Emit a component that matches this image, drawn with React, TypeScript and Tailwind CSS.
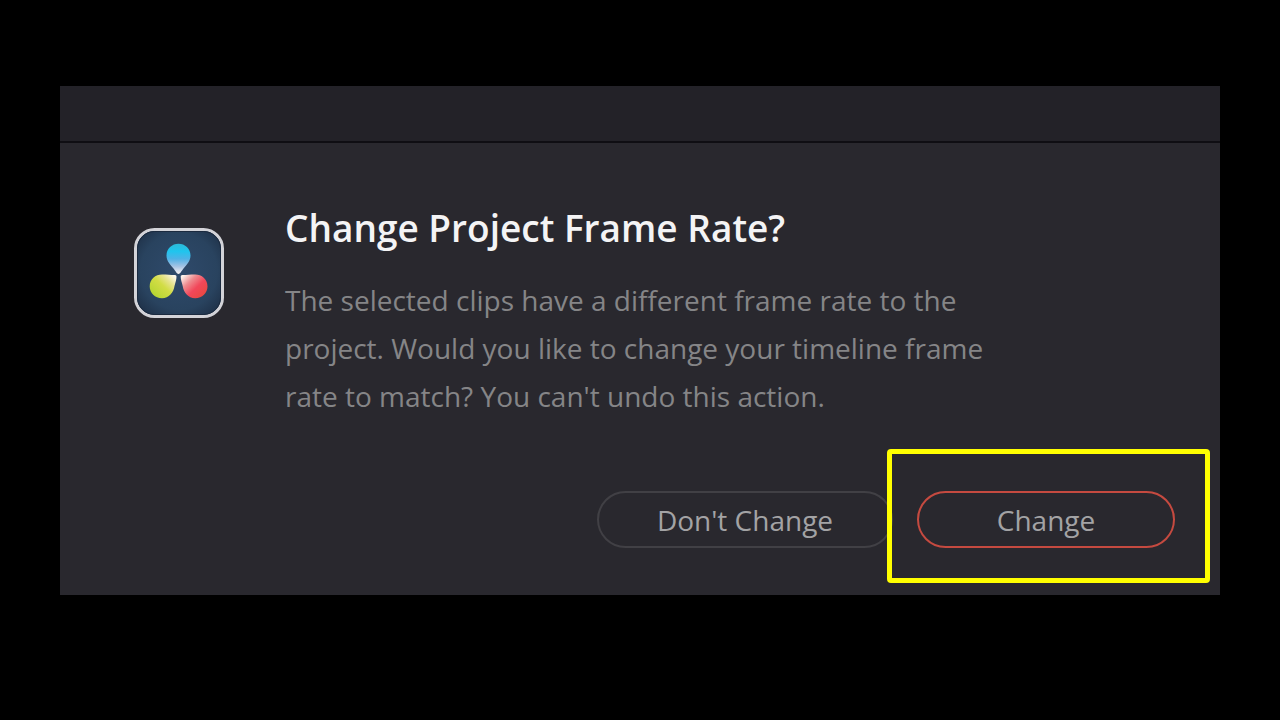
import clsx from "clsx";
import type { ReactNode } from "react";

type DialogButtonProps = {
  children: ReactNode;
  primary?: boolean;
};

function DialogButton({ children, primary }: DialogButtonProps) {
  return (
    <button
      type="button"
      className={clsx(
        "h-[57px] rounded-full border-2 text-[28px] leading-8 text-[#a3a3a5]",
        primary
          ? "w-[258px] border-[#c54a40]"
          : "w-[296px] border-[#414045]"
      )}
    >
      {children}
    </button>
  );
}

function ResolveIcon() {
  return (
    <svg viewBox="0 0 90 90" className="mt-3 h-[90px] w-[90px] shrink-0" aria-hidden="true">
      <defs>
        <radialGradient id="tile" cx="50%" cy="48%" r="68%">
          <stop offset="0" stopColor="#2f4a6b" />
          <stop offset="0.65" stopColor="#29435f" />
          <stop offset="1" stopColor="#1c2c42" />
        </radialGradient>
        <linearGradient id="blue" x1="0" y1="0" x2="0" y2="1">
          <stop offset="0" stopColor="#2cb9d8" />
          <stop offset="0.25" stopColor="#1fc5ee" />
          <stop offset="0.5" stopColor="#4fb2e6" />
          <stop offset="0.75" stopColor="#a5c3e4" />
          <stop offset="1" stopColor="#fbf4f3" />
        </linearGradient>
        <linearGradient id="green" x1="0.1" y1="0.9" x2="0.95" y2="0.1">
          <stop offset="0" stopColor="#b3d430" />
          <stop offset="0.5" stopColor="#d2dd45" />
          <stop offset="0.75" stopColor="#e6e38e" />
          <stop offset="1" stopColor="#fdf7ea" />
        </linearGradient>
        <linearGradient id="red" x1="0.9" y1="0.9" x2="0.05" y2="0.1">
          <stop offset="0" stopColor="#e8483f" />
          <stop offset="0.4" stopColor="#f2475a" />
          <stop offset="0.7" stopColor="#ee8a8e" />
          <stop offset="1" stopColor="#fdf1ea" />
        </linearGradient>
      </defs>
      <rect x="1.5" y="1.5" width="87" height="87" rx="19" fill="url(#tile)" stroke="#d3d3d8" strokeWidth="3" />
      <rect x="3.5" y="3.5" width="83" height="83" rx="17" fill="none" stroke="#1b2a3f" strokeWidth="1" />
      <path
        d="M44.5 46C43 46 41.5 43 39.5 40.500C36 36.500 32.500 33 32.500 27.500C32.500 20.500 38 15.700 44.500 15.700C51 15.700 56.500 20.500 56.500 27.500C56.500 33 53 36.500 49.500 40.500C47.500 43 46 46 44.5 46Z"
        fill="url(#blue)"
      />
      <path
        d="M42.500 48.500C42.500 51.500 41.500 54 40.500 58C39.500 64.500 35 70.300 28 70.300C21 70.300 15.700 65 15.700 58.500C15.700 51 21.500 46.500 28 46.500C33 46.500 36.500 47 40.500 47C41.700 47 42.500 47.500 42.500 48.500Z"
        fill="url(#green)"
      />
      <path
        d="M46.700 48.500C46.700 51.500 47.700 54 48.700 58C49.700 64.500 54.200 70.300 61.200 70.300C68.200 70.300 73.500 65 73.500 58.500C73.500 51 67.700 46.500 61.200 46.500C56.200 46.500 52.700 47 48.700 47C47.500 47 46.700 47.500 46.700 48.500Z"
        fill="url(#red)"
      />
    </svg>
  );
}

export default function App() {
  return (
    <main className="min-h-screen bg-black px-[60px] pt-[86px] font-['Open_Sans',sans-serif]">
      <section
        role="dialog"
        aria-labelledby="dialog-title"
        aria-describedby="dialog-message"
        className="bg-[#29282e]"
      >
        <header className="h-[57px] border-b-2 border-[#0f0e13] bg-[#232228]" />

        <div className="pt-[73px] pr-[45px] pb-[47px] pl-[74px]">
          <div className="flex items-start gap-[61px]">
            <ResolveIcon />
            <div className="max-w-[720px]">
              <h1
                id="dialog-title"
                className="text-[37px] leading-6 font-semibold text-[#f4f4f5]"
              >
                Change Project Frame Rate?
              </h1>
              <p
                id="dialog-message"
                className="mt-9 text-[28px] leading-12 text-[#858587]"
              >
                The selected clips have a different frame rate to the project.
                Would you like to change your timeline frame rate to match? You
                can't undo this action.
              </p>
            </div>
          </div>

          <div className="mt-[71px] flex justify-end gap-6">
            <DialogButton>Don't Change</DialogButton>
            <div className="relative">
              <DialogButton primary>Change</DialogButton>
              {/* callout around the button to press */}
              <div className="pointer-events-none absolute -top-[42px] -right-[35px] -bottom-[35px] -left-[30px] rounded-sm border-5 border-[#ffff00]" />
            </div>
          </div>
        </div>
      </section>
    </main>
  );
}
